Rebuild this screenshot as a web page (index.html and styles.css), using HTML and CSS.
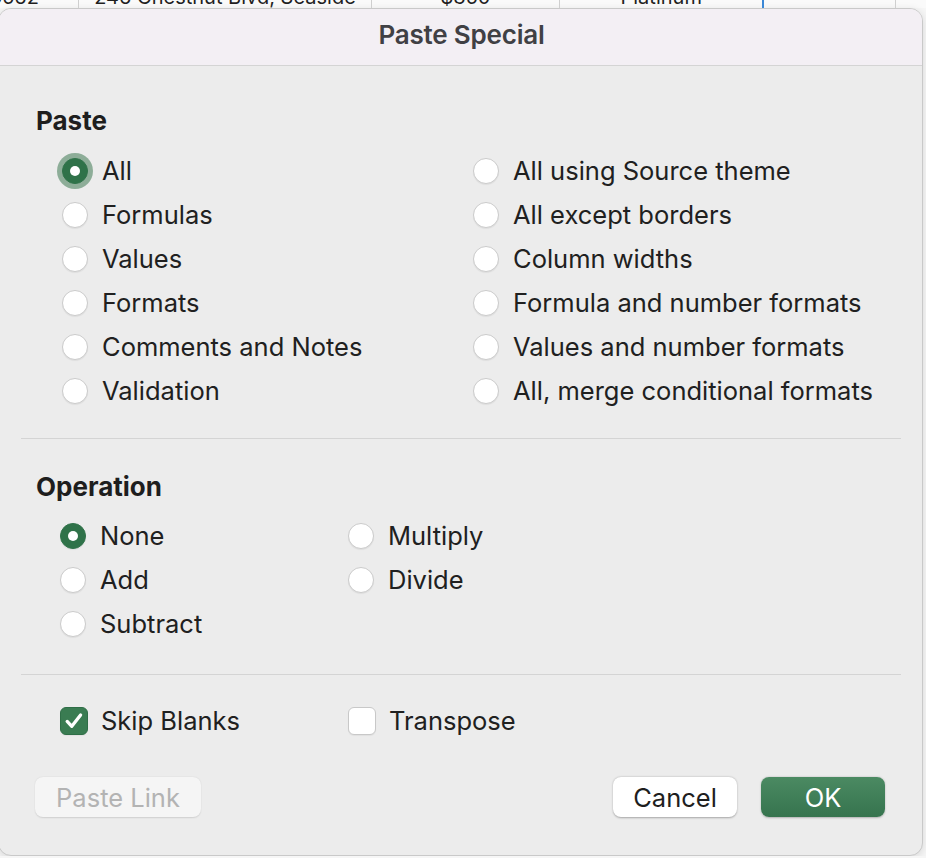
FILE: index.html
```html
<!DOCTYPE html>
<html lang="en">
<head>
    <meta charset="UTF-8">
    <meta name="viewport" content="width=device-width, initial-scale=1.0">
    <title>Paste Special</title>
    <link rel="stylesheet" href="styles.css">
</head>
<body>

    <!-- spreadsheet row peeking out above the sheet dialog -->
    <div class="sheet-row">
        <div class="cell cell-id"><span>5562</span></div>
        <div class="cell cell-address"><span>246 Chestnut Blvd, Seaside</span></div>
        <div class="cell cell-amount"><span>$350</span></div>
        <div class="cell cell-tier"><span>Platinum</span></div>
        <div class="cell cell-empty"></div>
        <div class="cell cell-last"></div>
    </div>

    <div class="dialog">
        <div class="dialog-title">Paste Special</div>

        <div class="dialog-body">
            <h2 class="section-title">Paste</h2>
            <div class="option-grid paste-grid">
                <label class="option"><span class="radio checked focused"></span>All</label>
                <label class="option"><span class="radio"></span>All using Source theme</label>
                <label class="option"><span class="radio"></span>Formulas</label>
                <label class="option"><span class="radio"></span>All except borders</label>
                <label class="option"><span class="radio"></span>Values</label>
                <label class="option"><span class="radio"></span>Column widths</label>
                <label class="option"><span class="radio"></span>Formats</label>
                <label class="option"><span class="radio"></span>Formula and number formats</label>
                <label class="option"><span class="radio"></span>Comments and Notes</label>
                <label class="option"><span class="radio"></span>Values and number formats</label>
                <label class="option"><span class="radio"></span>Validation</label>
                <label class="option"><span class="radio"></span>All, merge conditional formats</label>
            </div>

            <div class="divider divider-paste"></div>

            <h2 class="section-title">Operation</h2>
            <div class="option-grid operation-grid">
                <label class="option"><span class="radio checked"></span>None</label>
                <label class="option"><span class="radio"></span>Multiply</label>
                <label class="option"><span class="radio"></span>Add</label>
                <label class="option"><span class="radio"></span>Divide</label>
                <label class="option"><span class="radio"></span>Subtract</label>
            </div>

            <div class="divider divider-operation"></div>

            <div class="option-grid operation-grid check-row">
                <label class="option">
                    <span class="checkbox checked">
                        <svg viewBox="0 0 20 20" width="22" height="22"><path d="M3.8 10.4 L8 14.8 L16 4.6" fill="none" stroke="#fff" stroke-width="3" stroke-linecap="round" stroke-linejoin="round"/></svg>
                    </span>Skip Blanks
                </label>
                <label class="option"><span class="checkbox"></span>Transpose</label>
            </div>

            <div class="buttons-container">
                <button class="btn btn-disabled" disabled>Paste Link</button>
                <div class="buttons-right">
                    <button class="btn btn-default">Cancel</button>
                    <button class="btn btn-primary">OK</button>
                </div>
            </div>
        </div>
    </div>

</body>
</html>
```

FILE: styles.css
```css
:root {
    --green: #3a7c52;
    --green-dark: #2f7249;
    --dialog-bg: #ececec;
    --title-bg: #f3eff4;
    --line-color: #d4d4d4;
    --text-color: #202020;
}

* {
    box-sizing: border-box;
    margin: 0;
    padding: 0;
}

body {
    background-color: #f6f6f6;
    color: var(--text-color);
    font-family: 'Inter', 'Roboto', 'Liberation Sans', sans-serif;
    overflow: hidden;
}

/* Sheet row behind the dialog */
.sheet-row {
    display: flex;
    height: 8px;
    overflow: hidden;
    background-color: #fafafa;
}

.cell {
    height: 8px;
    border-right: 1px solid #cfcfcf;
    font-size: 20px;
    color: #1f1f1f;
    text-align: center;
    white-space: nowrap;
    overflow: hidden;
}

.cell span {
    display: block;
    margin-top: -9px;
    line-height: 12px;
}

.cell-id { width: 80px; text-align: left; text-indent: -10px; }
.cell-address { width: 294px; }
.cell-amount { width: 190px; }
.cell-tier { width: 205px; border-right: 2px solid #3a87d6; }
.cell-empty { width: 133px; }
.cell-last { width: 30px; border-right: none; }

/* Dialog sheet */
.dialog {
    width: 925px;
    height: 848px;
    margin-left: -2px;
    background-color: var(--dialog-bg);
    border: 1px solid #c9c9c9;
    border-radius: 13px;
    box-shadow: 0 2px 8px rgba(0,0,0,0.12);
    overflow: hidden;
}

.dialog-title {
    height: 57px;
    padding-bottom: 5px;
    background-color: var(--title-bg);
    border-bottom: 1px solid var(--line-color);
    display: flex;
    align-items: center;
    justify-content: center;
    font-size: 26px;
    font-weight: 600;
    letter-spacing: -0.2px;
    color: #404044;
    padding-left: 2px;
}

.dialog-body {
    padding: 40px 38px 0 39px;
}

.section-title {
    font-size: 26px;
    font-weight: 700;
    line-height: 30px;
    color: #1e1e1e;
    margin-left: -2px;
}

/* Radio / checkbox grids */
.option-grid {
    display: grid;
    grid-auto-rows: 44px;
}

.paste-grid {
    grid-template-columns: 411px 1fr;
    padding-left: 24px;
    margin-top: 13px;
}

.operation-grid {
    grid-template-columns: 288px 1fr;
    padding-left: 22px;
    margin-top: 12px;
}

.option {
    display: flex;
    align-items: center;
    gap: 14px;
    font-size: 25.5px;
    line-height: 1;
    white-space: nowrap;
}

.check-row .option {
    gap: 13px;
}

.radio {
    width: 26px;
    height: 26px;
    border-radius: 50%;
    background-color: #fff;
    border: 1px solid #cbcbcb;
    box-shadow: 0 1px 1px rgba(0,0,0,0.06);
    flex-shrink: 0;
    display: flex;
    align-items: center;
    justify-content: center;
}

.radio.checked {
    background-color: var(--green-dark);
    border-color: var(--green-dark);
}

.radio.checked::after {
    content: '';
    width: 10px;
    height: 10px;
    border-radius: 50%;
    background-color: #fff;
}

.radio.focused {
    box-shadow: 0 0 0 5px rgba(64,122,84,0.55);
}

.checkbox {
    width: 28px;
    height: 28px;
    border-radius: 6px;
    background-color: #fff;
    border: 1px solid #c8c8c8;
    box-shadow: 0 1px 1px rgba(0,0,0,0.05);
    flex-shrink: 0;
    display: flex;
    align-items: center;
    justify-content: center;
}

.checkbox.checked {
    background-color: var(--green);
    border-color: #2f6e47;
}

/* Dividers */
.divider {
    height: 1px;
    background-color: var(--line-color);
    margin: 0 -17px;
}

.divider-paste {
    margin-top: 25px;
    margin-bottom: 33px;
}

.divider-operation {
    margin-top: 28px;
}

.check-row {
    margin-top: 24px;
}

/* Buttons */
.buttons-container {
    display: flex;
    justify-content: space-between;
    margin-top: 34px;
    margin-left: -3px;
}

.buttons-right {
    display: flex;
    gap: 24px;
    margin-right: -1px;
}

.btn {
    height: 40px;
    border: none;
    border-radius: 8px;
    font-family: inherit;
    font-size: 25.5px;
    cursor: pointer;
}

.btn-disabled {
    width: 166px;
    background-color: #f5f5f5;
    color: #b3b3b3;
    box-shadow: 0 0.5px 1.5px rgba(0,0,0,0.12);
}

.btn-default {
    width: 124px;
    background-color: #fff;
    color: #1e1e1e;
    box-shadow: 0 0.5px 2px rgba(0,0,0,0.3);
}

.btn-primary {
    width: 124px;
    background: linear-gradient(#4b8a62, #36744e);
    color: #fff;
    box-shadow: 0 0.5px 2px rgba(0,0,0,0.25);
}
```
